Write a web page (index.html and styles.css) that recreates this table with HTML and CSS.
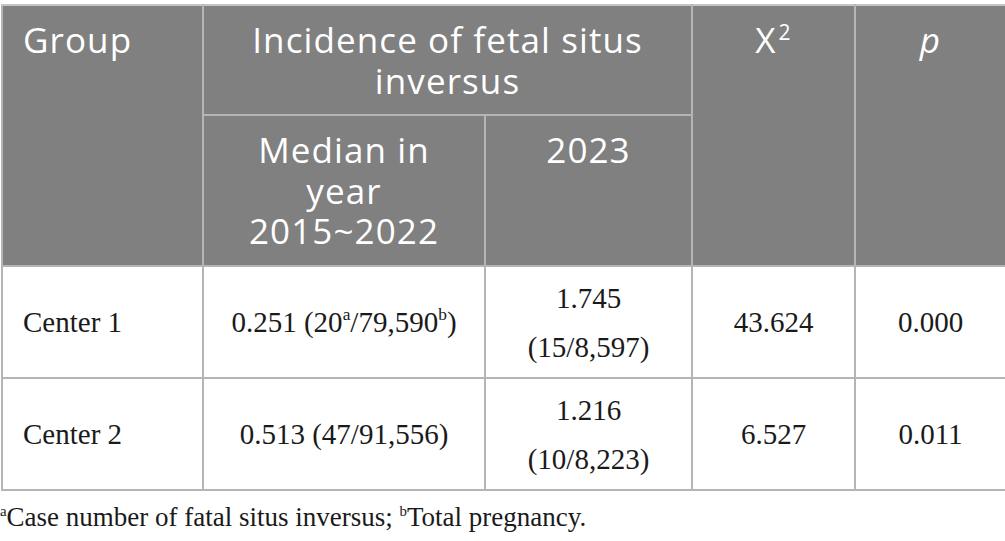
FILE: index.html
```html
<!DOCTYPE html>
<html>
<head>
<meta charset="utf-8">
<link rel="stylesheet" href="styles.css">
</head>
<body>
<div class="page">
  <table class="data">
    <colgroup>
      <col class="c1"><col class="c2"><col class="c3"><col class="c4"><col class="c5">
    </colgroup>
    <thead>
      <tr>
        <th rowspan="2" class="left">Group</th>
        <th colspan="2">Incidence of fetal situs<br>inversus</th>
        <th rowspan="2">X<sup class="sq">2</sup></th>
        <th rowspan="2"><i>p</i></th>
      </tr>
      <tr>
        <th>Median in<br>year<br>2015~2022</th>
        <th>2023</th>
      </tr>
    </thead>
    <tbody>
      <tr>
        <td class="left">Center 1</td>
        <td>0.251 (20<sup class="fn">a</sup>/79,590<sup class="fn">b</sup>)</td>
        <td>1.745<br>(15/8,597)</td>
        <td>43.624</td>
        <td>0.000</td>
      </tr>
      <tr>
        <td class="left">Center 2</td>
        <td>0.513 (47/91,556)</td>
        <td>1.216<br>(10/8,223)</td>
        <td>6.527</td>
        <td>0.011</td>
      </tr>
    </tbody>
  </table>
  <p class="note"><sup class="fn">a</sup>Case number of fatal situs inversus; <sup class="fn">b</sup>Total pregnancy.</p>
</div>
</body>
</html>
```
FILE: styles.css
```css
html, body {
  margin: 0;
  padding: 0;
  background: #ffffff;
}
.page {
  padding-top: 4px;
}
.data {
  border-collapse: collapse;
  table-layout: fixed;
  width: 1004px;
  margin-left: 1px;
}
.c1 { width: 201px; }
.c2 { width: 282px; }
.c3 { width: 207px; }
.c4 { width: 163px; }
.c5 { width: 151px; }
.data th, .data td {
  border: 2px solid #b5b5b5;
  text-align: center;
}
.data th {
  background: #7f807f;
  color: #ffffff;
  font-family: "Open Sans", "DejaVu Sans", sans-serif;
  font-weight: 400;
  font-size: 35px;
  letter-spacing: 1.1px;
  line-height: 40.5px;
  vertical-align: top;
  padding: 14px 20px 13px;
}
.data thead tr:first-child th {
  border-top-color: #c4c4c4;
}
.data th.left, .data td.left {
  text-align: left;
}
.data td {
  font-family: "Liberation Serif", "Times New Roman", serif;
  font-size: 29px;
  line-height: 49px;
  color: #1a1a1a;
  vertical-align: middle;
  padding: 7px 20px 5px;
}
.sq {
  font-size: 0.6em;
  vertical-align: 0.62em;
  line-height: 0;
  margin-left: 2px;
}
.fn {
  font-size: 0.6em;
  vertical-align: 0.7em;
  line-height: 0;
}
.note {
  margin: 0;
  padding-top: 9px;
  font-family: "Liberation Serif", "Times New Roman", serif;
  font-size: 27px;
  line-height: 34px;
  color: #1a1a1a;
}
.note .fn {
  font-size: 0.55em;
}
```
